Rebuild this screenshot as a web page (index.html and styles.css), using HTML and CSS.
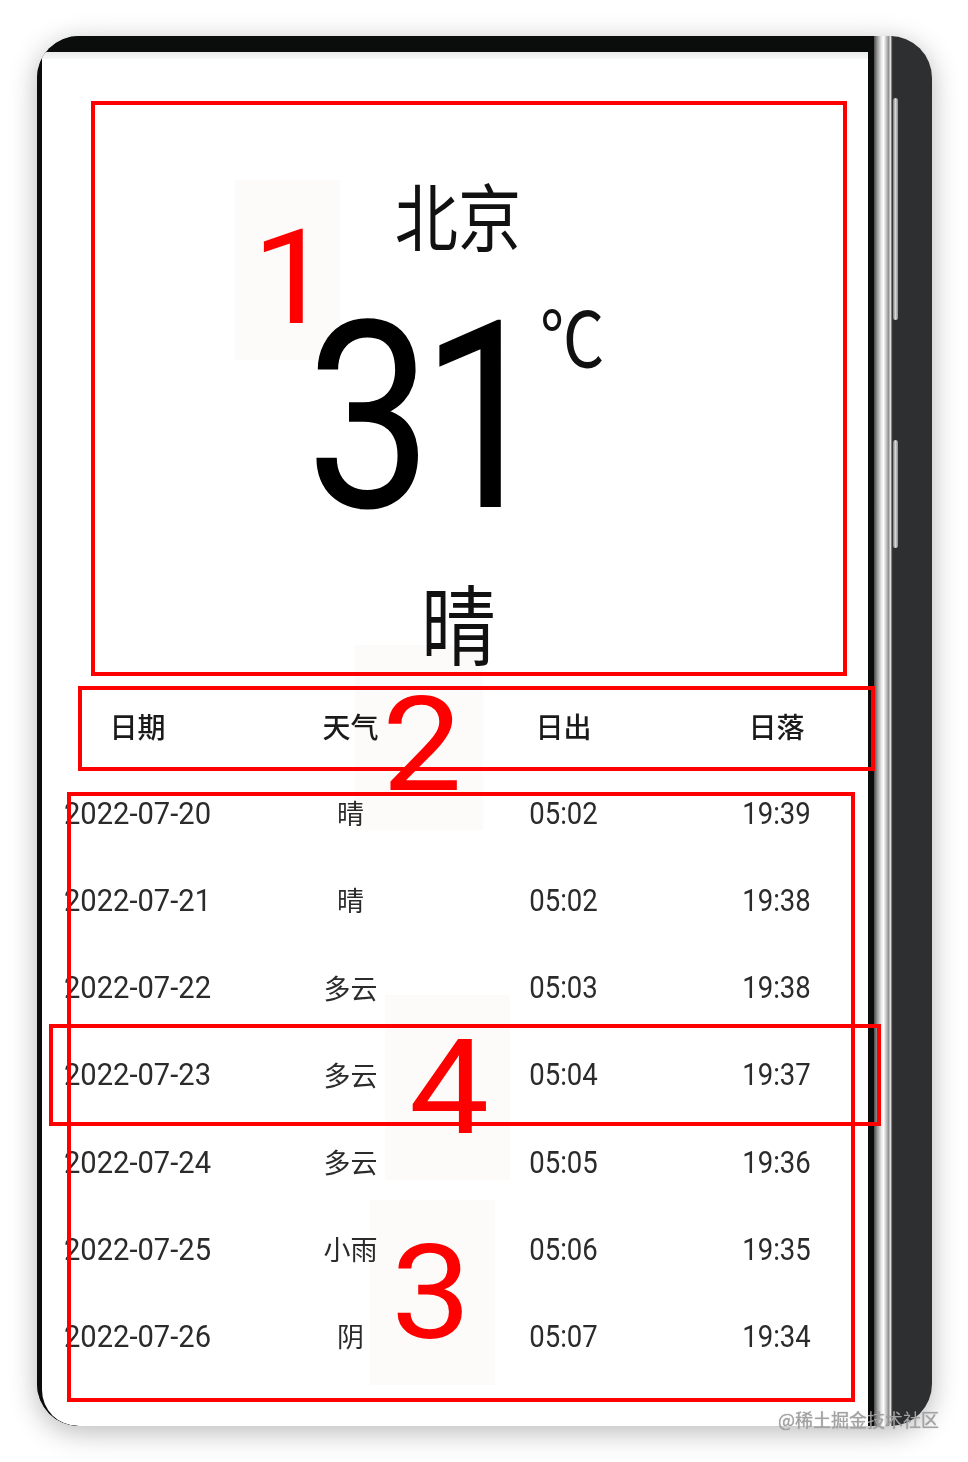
FILE: index.html
```html
<!DOCTYPE html>
<html lang="zh-CN">
<head>
<meta charset="utf-8">
<title>天气</title>
<link rel="stylesheet" href="styles.css">
</head>
<body>
<div class="page">
  <div class="phone">
    <div class="bezel">
      <div class="screen">
        <div class="status-strip"></div>
        <section class="current">
          <div class="city">北京</div>
          <div class="temp-row">
            <span class="temp-num">31</span>
            <span class="temp-unit">℃</span>
          </div>
          <div class="weather">晴</div>
        </section>
        <section class="table">
          <div class="cell head">日期</div>
          <div class="cell head">天气</div>
          <div class="cell head">日出</div>
          <div class="cell head">日落</div>

          <div class="cell date">2022-07-20</div><div class="cell cn">晴</div><div class="cell time">05:02</div><div class="cell time">19:39</div>
          <div class="cell date">2022-07-21</div><div class="cell cn">晴</div><div class="cell time">05:02</div><div class="cell time">19:38</div>
          <div class="cell date">2022-07-22</div><div class="cell cn">多云</div><div class="cell time">05:03</div><div class="cell time">19:38</div>
          <div class="cell date">2022-07-23</div><div class="cell cn">多云</div><div class="cell time">05:04</div><div class="cell time">19:37</div>
          <div class="cell date">2022-07-24</div><div class="cell cn">多云</div><div class="cell time">05:05</div><div class="cell time">19:36</div>
          <div class="cell date">2022-07-25</div><div class="cell cn">小雨</div><div class="cell time">05:06</div><div class="cell time">19:35</div>
          <div class="cell date">2022-07-26</div><div class="cell cn">阴</div><div class="cell time">05:07</div><div class="cell time">19:34</div>
        </section>
      </div>
    </div>
    <div class="rail"></div>
    <div class="side">
      <div class="side-btn btn-long"></div>
      <div class="side-btn btn-short"></div>
    </div>
  </div>

  <div class="ghost ghost-1"></div>
  <div class="ghost ghost-2"></div>
  <div class="ghost ghost-3"></div>
  <div class="ghost ghost-4"></div>

  <div class="mark box-1"></div>
  <div class="mark box-2"></div>
  <div class="mark box-3"></div>
  <div class="mark box-4"></div>

  <div class="label label-1">1</div>
  <div class="label label-2">2</div>
  <div class="label label-3">3</div>
  <div class="label label-4">4</div>

  <div class="watermark">@稀土掘金技术社区</div>
</div>
</body>
</html>
```
FILE: styles.css
```css
* { box-sizing: border-box; }

html, body {
  margin: 0;
  padding: 0;
  background: #ffffff;
}

.page {
  position: relative;
  width: 968px;
  height: 1462px;
  overflow: hidden;
  padding-top: 36px;
  padding-left: 37px;
  font-family: "Noto Sans CJK SC", "Noto Sans", sans-serif;
}

/* ---------- phone frame ---------- */
.phone {
  display: flex;
  width: 895px;
  height: 1390px;
  border-radius: 42px;
  overflow: hidden;
  background: #2e2f31;
  box-shadow: 0 6px 28px rgba(0, 0, 0, 0.28);
}

.bezel {
  width: 837px;
  flex: none;
  background: #0b0c0c;
  padding: 16px 6px 0 5px;
  display: flex;
}

.screen {
  flex: 1;
  background: #ffffff;
  border-radius: 6px 0 0 36px;
  display: flex;
  flex-direction: column;
  overflow: hidden;
}

.status-strip {
  height: 7px;
  flex: none;
  background: linear-gradient(#e9ecec, #f6f7f7);
}

.rail {
  width: 19px;
  flex: none;
  background: linear-gradient(to right,
    #4b4b4b 0%, #9a9a9a 18%, #e6e6e6 38%, #ffffff 50%,
    #cfcfcf 62%, #8c8c8c 78%, #f2f2f2 86%, #5a5a5a 94%, #1e1e1e 100%);
}

.side {
  flex: 1;
  display: flex;
  flex-direction: column;
  padding-top: 62px;
}

.side-btn {
  width: 5px;
  border-radius: 3px;
  background: linear-gradient(to right, #7d7d7d, #d8d8d8, #8a8a8a);
}

.btn-long { height: 222px; margin-bottom: 120px; }
.btn-short { height: 108px; }

/* ---------- current weather ---------- */
.current {
  height: 623px;
  flex: none;
  display: flex;
  flex-direction: column;
  align-items: center;
  color: #111;
}

.city {
  margin-top: 118px;
  margin-left: 6px;
  font-size: 73px;
  line-height: 73px;
  height: 73px;
  transform: scaleX(0.865);
}

.temp-row {
  margin-top: 34px;
  margin-left: 12px;
  display: flex;
  align-items: flex-start;
  height: 262px;
}

.temp-num {
  margin-top: 5px;
  font-family: Roboto, "Liberation Sans", sans-serif;
  font-size: 262px;
  line-height: 257px;
  letter-spacing: -14px;
  color: #000;
  transform: scaleX(0.86);
  transform-origin: left center;
  margin-right: -37px;
}

.temp-unit {
  margin-top: 12px;
  margin-left: 4px;
  font-size: 76px;
  line-height: 76px;
  color: #111;
  transform: scaleX(0.85);
  transform-origin: left center;
}

.weather {
  margin-top: 32px;
  margin-left: 6px;
  font-size: 87px;
  line-height: 87px;
  transform: scaleX(0.86);
}

/* ---------- forecast table ---------- */
.table {
  display: grid;
  grid-template-columns: repeat(4, 213px);
  grid-auto-rows: 87.2px;
  margin-left: -11px;
  color: #2b2b2b;
}

.cell {
  display: flex;
  align-items: center;
  justify-content: center;
  white-space: nowrap;
}

.head {
  font-size: 28px;
  font-weight: 500;
  color: #1a1a1a;
}

.date,
.time {
  font-family: Roboto, "Liberation Sans", sans-serif;
  font-size: 32px;
}

.date { transform: scaleX(0.91); }
.time { transform: scaleX(0.86); }

.cn {
  font-size: 27px;
}

/* ---------- annotations overlay ---------- */
.ghost {
  position: absolute;
  background: #fdfbf9;
  mix-blend-mode: multiply;
}
.ghost-1 { left: 235px; top: 180px; width: 105px; height: 180px; }
.ghost-2 { left: 355px; top: 645px; width: 128px; height: 185px; }
.ghost-3 { left: 370px; top: 1200px; width: 125px; height: 185px; }
.ghost-4 { left: 385px; top: 995px; width: 125px; height: 185px; }

.mark {
  position: absolute;
  border: 4px solid #ff0000;
}
.box-1 { left: 91px; top: 101px; width: 756px; height: 575px; }
.box-2 { left: 78px; top: 686px; width: 797px; height: 85px; }
.box-3 { left: 67px; top: 792px; width: 788px; height: 610px; }
.box-4 { left: 49px; top: 1024px; width: 832px; height: 102px; }

.label {
  position: absolute;
  font-family: Roboto, "Liberation Sans", sans-serif;
  font-size: 132px;
  line-height: 100px;
  color: #ff0000;
  transform: scaleX(1.08);
  transform-origin: left center;
}
.label-1 { left: 252px; top: 228px; letter-spacing: -26px; }
.label-2 { left: 382px; top: 695px; }
.label-3 { left: 391px; top: 1243px; }
.label-4 { left: 409px; top: 1038px; }

.watermark {
  position: absolute;
  left: 778px;
  top: 1407px;
  font-size: 18px;
  line-height: 24px;
  color: #a3a3a3;
  text-shadow: 0 0 1px rgba(60, 60, 60, 0.5);
  white-space: nowrap;
}
```
